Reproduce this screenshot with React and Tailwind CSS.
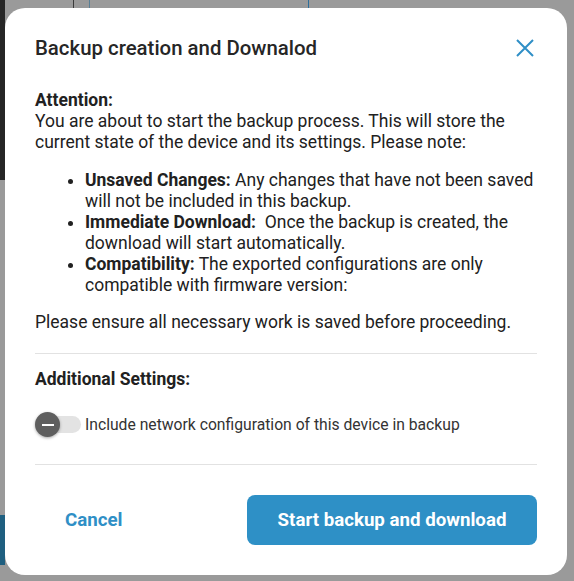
import React from "react";

const font = { fontFamily: "Roboto, 'Noto Sans', sans-serif" };

const BackupDialog = () => {
  return (
    <div className="ml-[5px] mt-[8px] flex h-[567px] w-[562px] flex-col rounded-[20px] bg-white px-[30px] pt-[26px] text-[#212121]">
      <div className="flex items-center justify-between">
        <h2 className="text-[20.4px] leading-[28px] font-medium text-[#262626]">
          Backup creation and Downalod
        </h2>
        <button className="mr-[3px] text-[#2f8fc6]">
          <svg width="18" height="18" viewBox="0 0 18 18" fill="none" stroke="currentColor" strokeWidth="2">
            <path d="M1 1 L17 17 M17 1 L1 17" />
          </svg>
        </button>
      </div>

      <div className="mt-[28px] text-[17.5px] leading-[21px]">
        <p className="font-bold">Attention:</p>
        <p>
          You are about to start the backup process. This will store the
          current state of the device and its settings. Please note:
        </p>
        <ul className="mt-[17px] list-disc pl-[50px]">
          <li>
            <span className="font-bold">Unsaved Changes:</span> Any changes
            that have not been saved will not be included in this backup.
          </li>
          <li>
            <span className="font-bold">Immediate Download:</span>&nbsp; Once
            the backup is created, the download will start automatically.
          </li>
          <li>
            <span className="font-bold">Compatibility:</span> The exported
            configurations are only compatible with firmware version:
          </li>
        </ul>
        <p className="mt-[16px]">
          Please ensure all necessary work is saved before proceeding.
        </p>
      </div>

      <div className="mt-[20px] border-t border-[#e2e2e2]" />

      <p className="mt-[15px] text-[17.5px] leading-[21px] font-bold">
        Additional Settings:
      </p>

      <label className="mt-[22px] flex items-center">
        <span className="relative flex h-[25px] w-[46px] items-center">
          <span className="ml-[4px] h-[17px] w-[42px] rounded-full bg-[#e3e3e3]" />
          <span className="absolute left-0 top-0 flex h-[25px] w-[25px] items-center justify-center rounded-full bg-[#5f5f5f] shadow-[0_1px_3px_rgba(0,0,0,0.35)]">
            <span className="h-[2px] w-[12px] bg-white" />
          </span>
        </span>
        <span className="ml-[4px] text-[15.7px] text-[#333333]">
          Include network configuration of this device in backup
        </span>
      </label>

      <div className="mt-[27px] border-t border-[#e2e2e2]" />

      <div className="mt-[30px] flex items-center justify-between">
        <button className="ml-[30px] text-[18.7px] font-bold text-[#2f8fc6]">
          Cancel
        </button>
        <button className="h-[50px] w-[290px] rounded-[8px] bg-[#2e90c6] text-[18.7px] font-bold text-white">
          Start backup and download
        </button>
      </div>
    </div>
  );
};

export default function App() {
  return (
    <div className="relative h-[581px] w-[574px] overflow-hidden bg-[#9a9a9a]" style={font}>
      {/* dimmed page behind the modal */}
      <div className="absolute left-0 top-0 h-[180px] w-[5px] bg-[#262626]" />
      <div className="absolute left-[73px] top-0 h-[8px] w-px bg-[#3a3a3a]" />
      <div className="absolute left-[89px] top-0 h-[8px] w-px bg-[#5a7f95]" />
      <div className="absolute left-[308px] top-0 h-[8px] w-px bg-[#2e6f9b]" />
      <div className="absolute left-0 top-[515px] h-[50px] w-[5px] bg-[#1f5f80]" />
      <div className="relative">
        <BackupDialog />
      </div>
    </div>
  );
}
